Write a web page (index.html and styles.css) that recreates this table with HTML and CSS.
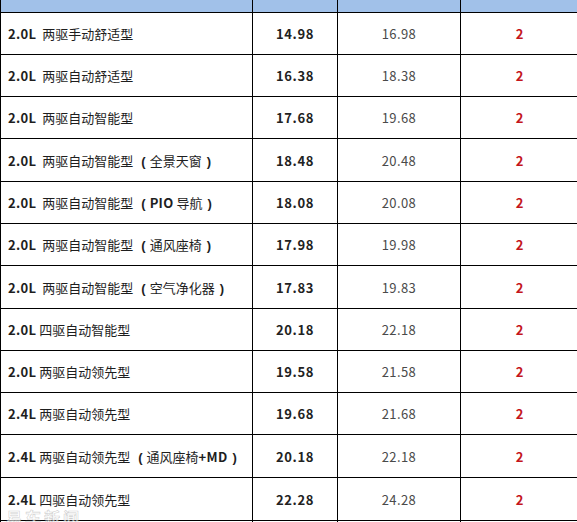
FILE: index.html
```html
<!DOCTYPE html>
<html lang="zh-CN">
<head>
<meta charset="utf-8">
<title>车型价格表</title>
<link rel="stylesheet" href="styles.css">
</head>
<body>
<div class="wrap">
<table class="price">
  <thead>
    <tr><th class="c1"></th><th class="c2"></th><th class="c3"></th><th class="c4"></th></tr>
  </thead>
  <tbody>
    <tr><td class="c1"><b class="lat wide">2.0L</b>两驱手动舒适型</td><td class="c2">14.98</td><td class="c3">16.98</td><td class="c4">2</td></tr>
    <tr><td class="c1"><b class="lat wide">2.0L</b>两驱自动舒适型</td><td class="c2">16.38</td><td class="c3">18.38</td><td class="c4">2</td></tr>
    <tr><td class="c1"><b class="lat wide">2.0L</b>两驱自动智能型</td><td class="c2">17.68</td><td class="c3">19.68</td><td class="c4">2</td></tr>
    <tr class="tall"><td class="c1"><b class="lat wide">2.0L</b>两驱自动智能型<span class="po">(</span>全景天窗<span class="pc">)</span></td><td class="c2">18.48</td><td class="c3">20.48</td><td class="c4">2</td></tr>
    <tr><td class="c1"><b class="lat wide">2.0L</b>两驱自动智能型<span class="po">(</span><b class="lat">PIO</b> 导航<span class="pc">)</span></td><td class="c2">18.08</td><td class="c3">20.08</td><td class="c4">2</td></tr>
    <tr><td class="c1"><b class="lat wide">2.0L</b>两驱自动智能型<span class="po">(</span>通风座椅<span class="pc">)</span></td><td class="c2">17.98</td><td class="c3">19.98</td><td class="c4">2</td></tr>
    <tr class="tall"><td class="c1"><b class="lat wide">2.0L</b>两驱自动智能型<span class="po">(</span>空气净化器<span class="pc">)</span></td><td class="c2">17.83</td><td class="c3">19.83</td><td class="c4">2</td></tr>
    <tr><td class="c1"><b class="lat">2.0L</b> 四驱自动智能型</td><td class="c2">20.18</td><td class="c3">22.18</td><td class="c4">2</td></tr>
    <tr><td class="c1"><b class="lat">2.0L</b> 两驱自动领先型</td><td class="c2">19.58</td><td class="c3">21.58</td><td class="c4">2</td></tr>
    <tr><td class="c1"><b class="lat">2.4L</b> 两驱自动领先型</td><td class="c2">19.68</td><td class="c3">21.68</td><td class="c4">2</td></tr>
    <tr class="tall"><td class="c1"><b class="lat">2.4L</b> 两驱自动领先型<span class="po">(</span>通风座椅<b class="lat">+MD</b><span class="pc">)</span></td><td class="c2">20.18</td><td class="c3">22.18</td><td class="c4">2</td></tr>
    <tr class="tall"><td class="c1"><b class="lat">2.4L</b> 四驱自动领先型</td><td class="c2">22.28</td><td class="c3">24.28</td><td class="c4">2</td></tr>
    <tr><td class="c1"></td><td class="c2"></td><td class="c3"></td><td class="c4"></td></tr>
  </tbody>
</table>
<div class="mark">易车新闻</div>
</div>
</body>
</html>
```
FILE: styles.css
```css
html, body {
  margin: 0;
  padding: 0;
  background: #fff;
  overflow: hidden;
}
.wrap {
  position: relative;
  width: 577px;
  height: 522px;
  overflow: hidden;
}
.price {
  border-collapse: separate;
  border-spacing: 0;
  table-layout: fixed;
  width: 578px;
  font-family: "Noto Sans CJK SC", "Noto Sans", sans-serif;
  font-size: 13px;
}
.price th, .price td {
  box-sizing: border-box;
  padding: 0;
  border-right: 1px solid #000;
  border-bottom: 1px solid #000;
  vertical-align: middle;
}
.price th.c1, .price td.c1 { border-left: 1px solid #000; }
.price th.c4, .price td.c4 { border-right: none; }
.price th {
  height: 13px;
  background: #a1c1e9;
}
.price tbody tr td { height: 42px; }
.price tbody tr.tall td { height: 43px; }
.c1 { width: 253px; }
.c2 { width: 85px; }
.c3 { width: 123px; }
.c4 { width: 117px; }
td.c1 {
  padding-left: 7px;
  color: #1e1e1e;
  text-align: left;
  white-space: nowrap;
}
.lat {
  font-weight: bold;
  letter-spacing: 0.3px;
}
.lat.wide {
  margin-right: 6px;
}
.po, .pc {
  display: inline-block;
  font-family: "Liberation Sans", sans-serif;
  font-weight: bold;
}
.po { padding: 0 4px 0 8px; }
.pc { padding: 0 0 0 5px; }
td.c2 {
  text-align: center;
  font-weight: bold;
  color: #222;
  letter-spacing: 0.6px;
}
td.c3 {
  text-align: center;
  color: #4a4a4a;
  letter-spacing: 0.4px;
}
td.c4 {
  text-align: center;
  font-weight: bold;
  color: #c4161c;
}
.mark {
  position: absolute;
  left: 6px;
  top: 509px;
  font-family: "Noto Sans CJK SC", sans-serif;
  font-size: 16px;
  font-weight: bold;
  line-height: 16px;
  color: rgba(255,255,255,0.6);
  -webkit-text-stroke: 0.6px rgba(160,160,160,0.5);
  letter-spacing: 3px;
}
```
